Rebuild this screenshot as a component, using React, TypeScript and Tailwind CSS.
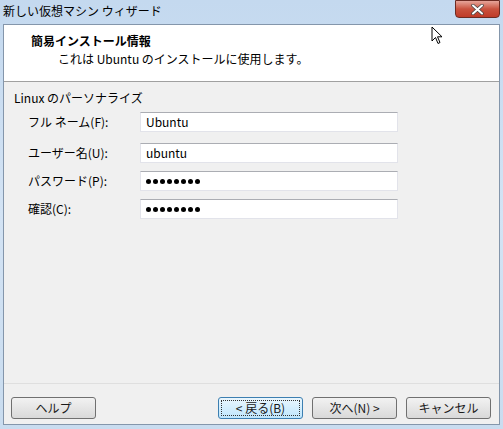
import React from 'react'

const font = { fontFamily: '"Segoe UI", "Noto Sans CJK JP", "Noto Sans", sans-serif' }

const fields = [
  { label: 'フル ネーム(F):', value: 'Ubuntu', mt: 'mt-[6px]' },
  { label: 'ユーザー名(U):', value: 'ubuntu', mt: 'mt-[11px]' },
  { label: 'パスワード(P):', value: '', pw: true, mt: 'mt-[8px]' },
  { label: '確認(C):', value: '', pw: true, mt: 'mt-[8px]' },
]

function Dots() {
  return (
    <div className="flex gap-[2px]">
      {Array.from({ length: 8 }).map((_, i) => (
        <div key={i} className="w-[5px] h-[5px] rounded-full bg-black" />
      ))}
    </div>
  )
}

function Button({ children, primary = false }: { children: React.ReactNode; primary?: boolean }) {
  return (
    <div
      className={
        'w-[85px] h-[22px] rounded-[3px] border flex items-center justify-center text-[12px] text-[#1a1a1a] ' +
        (primary
          ? 'border-[#3c7fb1] bg-gradient-to-b from-[#eaf6fd] to-[#bee6fd] p-[2px]'
          : 'border-[#707070] bg-gradient-to-b from-[#f2f2f2] to-[#d9d9d9]')
      }
    >
      {primary ? (
        <div className="w-full h-full border border-dotted border-[#333] flex items-center justify-center">
          {children}
        </div>
      ) : (
        children
      )}
    </div>
  )
}

export default function App() {
  return (
    <div
      style={font}
      className="w-[503px] h-[429px] flex flex-col bg-gradient-to-b from-[#c4d9ef] via-[#d3e3f4] to-[#c9dcef] overflow-hidden"
    >
      {/* title bar */}
      <div className="h-[24px] flex items-start justify-between shrink-0">
        <span className="pl-[3px] pt-[2px] text-[12px] text-black leading-[18px]">新しい仮想マシン ウィザード</span>
        <div className="mr-[3px] w-[45px] h-[18px] rounded-b-[4px] border border-[#6d2b22] bg-gradient-to-b from-[#e6a59a] via-[#c9523e] to-[#bf3b28] flex items-center justify-center">
          <svg width="13" height="11" viewBox="0 0 13 11">
            <path d="M2 1.5 L11 9.5 M11 1.5 L2 9.5" stroke="#444" strokeWidth="3.4" strokeLinecap="round" />
            <path d="M2 1.5 L11 9.5 M11 1.5 L2 9.5" stroke="#fff" strokeWidth="2" strokeLinecap="round" />
          </svg>
        </div>
      </div>

      {/* dialog client area */}
      <div className="mx-[3px] mb-[4px] flex-1 flex flex-col border border-[#8496ab] bg-[#f0f0f0] relative">
        {/* header */}
        <div className="h-[57px] bg-white border-b border-[#a0a0a0] shrink-0 pl-[27px] pt-[8px]">
          <div className="text-[12px] font-bold text-black leading-[16px]">簡易インストール情報</div>
          <div className="pl-[27px] pt-[2px] text-[12px] text-black leading-[16px]">これは Ubuntu のインストールに使用します。</div>
        </div>

        {/* body */}
        <div className="flex-1 flex flex-col pl-[10px] pt-[8px]">
          <div className="text-[12px] text-black leading-[16px]">Linux のパーソナライズ</div>
          {fields.map((f) => (
            <div key={f.label} className={'flex items-center ' + f.mt}>
              <span className="w-[126px] pl-[14px] text-[12px] text-black">{f.label}</span>
              <div className="w-[258px] h-[20px] bg-white border border-[#e2e3ea] border-t-[#abadb3] flex items-center pl-[5px]">
                {f.pw ? <Dots /> : <span className="text-[12px] text-black">{f.value}</span>}
              </div>
            </div>
          ))}
        </div>

        {/* footer */}
        <div className="h-[41px] shrink-0 border-t border-[#dfdfdf] flex items-start pt-[13px] pl-[7px] pr-[8px]">
          <Button>ヘルプ</Button>
          <div className="flex-1" />
          <Button primary>&lt; 戻る(B)</Button>
          <div className="w-[9px]" />
          <Button>次へ(N) &gt;</Button>
          <div className="w-[9px]" />
          <Button>キャンセル</Button>
        </div>

        {/* mouse cursor */}
        <svg className="absolute left-[427px] top-[1px]" width="14" height="20" viewBox="0 0 14 20">
          <path d="M1 1 L1 15 L4.5 11.5 L7 17.5 L9 16.5 L6.5 10.8 L11 10.8 Z" fill="#fff" stroke="#000" strokeWidth="1" />
        </svg>
      </div>
    </div>
  )
}
